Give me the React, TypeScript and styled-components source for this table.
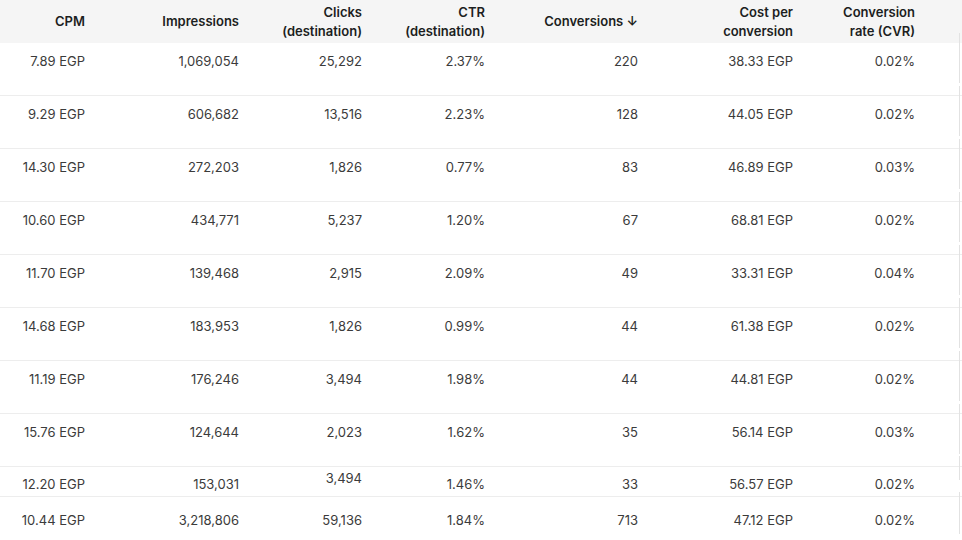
import styled, { createGlobalStyle } from "styled-components";

const GlobalStyle = createGlobalStyle`
  html, body {
    margin: 0;
    padding: 0;
    background: #ffffff;
  }
  body {
    font-family: Inter, "Liberation Sans", sans-serif;
    -webkit-font-smoothing: antialiased;
  }
`;

const COLUMNS = "85px 154px 123px 123px 153px 155px 122px 45px 1fr";

const Table = styled.div`
  width: 962px;
  height: 540px;
  overflow: hidden;
  display: flex;
  flex-direction: column;
`;

const HeaderRow = styled.div`
  display: grid;
  grid-template-columns: ${COLUMNS};
  height: 43px;
  flex-shrink: 0;
  background: #f5f5f5;
  align-items: center;
`;

const HeaderCell = styled.div`
  text-align: right;
  font-size: 13px;
  font-weight: 600;
  line-height: 19px;
  color: #1c1e21;
  white-space: pre-line;
`;

const Row = styled.div<{ $height: number; $padTop: number; $last?: boolean }>`
  display: grid;
  grid-template-columns: ${COLUMNS};
  height: ${(p) => p.$height}px;
  box-sizing: border-box;
  padding-top: ${(p) => p.$padTop}px;
  border-bottom: ${(p) => (p.$last ? "none" : "1.5px solid #ededed")};
  flex-shrink: 0;
`;

const Cell = styled.div<{ $lift?: number }>`
  text-align: right;
  font-size: 13px;
  line-height: 16px;
  color: #3b3b3b;
  white-space: nowrap;
  transform: translateY(${(p) => -(p.$lift ?? 0)}px);
`;

const Spacer = styled.div``;

const EdgeCell = styled.div`
  border-right: 1px solid #e2e2e2;
  margin-top: -20px;
  height: 120%;
`;

const headers = [
  "CPM",
  "Impressions",
  "Clicks\n(destination)",
  "CTR\n(destination)",
  "Conversions ↓",
  "Cost per\nconversion",
  "Conversion\nrate (CVR)",
];

type RowData = {
  cells: string[];
  height: number;
  padTop: number;
  lift?: number[];
  last?: boolean;
};

const rows: RowData[] = [
  { cells: ["7.89 EGP", "1,069,054", "25,292", "2.37%", "220", "38.33 EGP", "0.02%"], height: 53, padTop: 10 },
  { cells: ["9.29 EGP", "606,682", "13,516", "2.23%", "128", "44.05 EGP", "0.02%"], height: 53, padTop: 10 },
  { cells: ["14.30 EGP", "272,203", "1,826", "0.77%", "83", "46.89 EGP", "0.03%"], height: 53, padTop: 10 },
  { cells: ["10.60 EGP", "434,771", "5,237", "1.20%", "67", "68.81 EGP", "0.02%"], height: 53, padTop: 10 },
  { cells: ["11.70 EGP", "139,468", "2,915", "2.09%", "49", "33.31 EGP", "0.04%"], height: 53, padTop: 10 },
  { cells: ["14.68 EGP", "183,953", "1,826", "0.99%", "44", "61.38 EGP", "0.02%"], height: 53, padTop: 10 },
  { cells: ["11.19 EGP", "176,246", "3,494", "1.98%", "44", "44.81 EGP", "0.02%"], height: 53, padTop: 10 },
  { cells: ["15.76 EGP", "124,644", "2,023", "1.62%", "35", "56.14 EGP", "0.03%"], height: 53, padTop: 10 },
  {
    cells: ["12.20 EGP", "153,031", "3,494", "1.46%", "33", "56.57 EGP", "0.02%"],
    height: 30,
    padTop: 9,
    lift: [0, 0, 6, 0, 0, 0, 0],
  },
  { cells: ["10.44 EGP", "3,218,806", "59,136", "1.84%", "713", "47.12 EGP", "0.02%"], height: 50, padTop: 15, last: true },
];

const App = () => {
  return (
    <>
      <GlobalStyle />
      <Table>
        <HeaderRow>
          {headers.map((h) => (
            <HeaderCell key={h}>{h}</HeaderCell>
          ))}
          <Spacer />
          <Spacer />
        </HeaderRow>
        {rows.map((r, i) => (
          <Row key={i} $height={r.height} $padTop={r.padTop} $last={r.last}>
            {r.cells.map((c, j) => (
              <Cell key={j} $lift={r.lift?.[j]}>
                {c}
              </Cell>
            ))}
            <EdgeCell />
            <Spacer />
          </Row>
        ))}
      </Table>
    </>
  );
};

export default App;
